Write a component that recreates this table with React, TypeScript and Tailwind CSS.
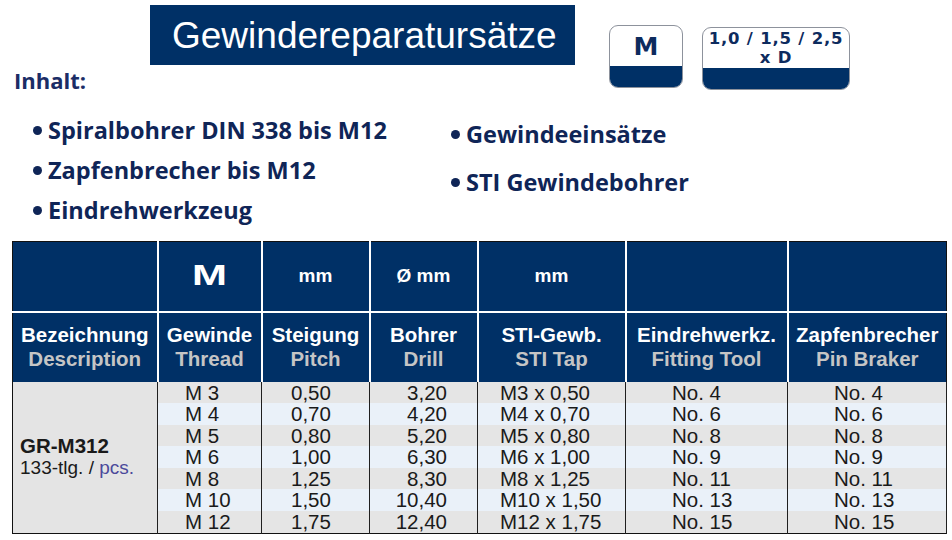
import React from "react";

const navy = "bg-[#003066]";

const rows = [
  ["M 3", "0,50", "3,20", "M3 x 0,50", "No. 4", "No. 4"],
  ["M 4", "0,70", "4,20", "M4 x 0,70", "No. 6", "No. 6"],
  ["M 5", "0,80", "5,20", "M5 x 0,80", "No. 8", "No. 8"],
  ["M 6", "1,00", "6,30", "M6 x 1,00", "No. 9", "No. 9"],
  ["M 8", "1,25", "8,30", "M8 x 1,25", "No. 11", "No. 11"],
  ["M 10", "1,50", "10,40", "M10 x 1,50", "No. 13", "No. 13"],
  ["M 12", "1,75", "12,40", "M12 x 1,75", "No. 15", "No. 15"],
];

const headers = [
  ["Bezeichnung", "Description"],
  ["Gewinde", "Thread"],
  ["Steigung", "Pitch"],
  ["Bohrer", "Drill"],
  ["STI-Gewb.", "STI Tap"],
  ["Eindrehwerkz.", "Fitting Tool"],
  ["Zapfenbrecher", "Pin Braker"],
];

function Badge({ w, children }: { w: string; children: React.ReactNode }) {
  return (
    <div className={`${w} flex h-[63px] flex-col overflow-hidden rounded-[9px] border border-[#8d929c] bg-white`}>
      <div className="flex flex-1 flex-col items-center justify-center text-[#0d2b5e]">{children}</div>
      <div className={`h-[21px] ${navy}`} />
    </div>
  );
}

function Bullet({ children }: { children: React.ReactNode }) {
  return (
    <div className="flex items-center">
      <span className="mr-[6px] inline-block h-[9px] w-[9px] rounded-full bg-[#0f2557]" />
      <span>{children}</span>
    </div>
  );
}

export default function App() {
  const cellPads = ["pl-[27px] text-left", "pl-[29px] text-left", "pr-[30px] text-right", "pl-[22px] text-left", "pl-[46px] text-left", "pl-[46px] text-left"];
  return (
    <div className="h-[540px] w-[952px] overflow-hidden bg-white font-['Liberation_Sans',Arial,sans-serif]">
      {/* top: title, badges, contents */}
      <div className="flex items-start">
        <div className="w-[609px]">
          <div className={`ml-[150px] mt-[5px] flex h-[60px] w-[425px] items-center pl-[22px] ${navy}`}>
            <span className="text-[37px] leading-none text-white">Gewindereparatursätze</span>
          </div>
          <div className="pl-[14px] font-['Open_Sans',sans-serif] text-[22px] font-bold leading-[30px] text-[#1b2d66]">Inhalt:</div>
        </div>
        <div className="mt-[25px]">
          <Badge w="w-[74px]">
            <span className="font-['DejaVu_Sans',sans-serif] text-[25px] font-bold leading-none">M</span>
          </Badge>
        </div>
        <div className="ml-[19px] mt-[27px]">
          <Badge w="w-[148px]">
            <div className="flex flex-col items-center font-['DejaVu_Sans',sans-serif] text-[16.5px] font-bold leading-[19px] tracking-[0.8px]">
              <span className="whitespace-nowrap">1,0 / 1,5 / 2,5</span>
              <span>x D</span>
            </div>
          </Badge>
        </div>
      </div>

      <div className="mt-[15px] flex font-['Open_Sans',sans-serif] text-[23.5px] font-bold text-[#0f2557]">
        <div className="w-[451px] pl-[33px] leading-[40px]">
          <Bullet>Spiralbohrer DIN 338 bis M12</Bullet>
          <Bullet>Zapfenbrecher bis M12</Bullet>
          <Bullet>Eindrehwerkzeug</Bullet>
        </div>
        <div className="leading-[48px]">
          <Bullet>Gewindeeinsätze</Bullet>
          <Bullet>STI Gewindebohrer</Bullet>
        </div>
      </div>

      {/* table */}
      <table className="ml-[12px] mt-[11px] w-[934px] table-fixed border-collapse border border-[#111]">
        <colgroup>
          <col className="w-[145px]" />
          <col className="w-[104px]" />
          <col className="w-[108px]" />
          <col className="w-[108px]" />
          <col className="w-[148px]" />
          <col className="w-[162px]" />
          <col className="w-[159px]" />
        </colgroup>
        <thead>
          <tr className={`h-[70px] ${navy} text-white`}>
            <th className="border-b-2 border-r-2 border-white" />
            <th className="border-2 border-t-0 border-white">
              <span className="inline-block scale-x-[1.4] text-[30px] font-bold leading-none">M</span>
            </th>
            <th className="border-2 border-t-0 border-white text-[19px] font-bold">mm</th>
            <th className="border-2 border-t-0 border-white text-[19px] font-bold">Ø mm</th>
            <th className="border-2 border-t-0 border-white text-[19px] font-bold">mm</th>
            <th className="border-2 border-t-0 border-white" />
            <th className="border-b-2 border-l-2 border-white" />
          </tr>
          <tr className={`h-[70px] ${navy}`}>
            {headers.map(([de, en], i) => (
              <th
                key={de}
                className={`border-white text-[20.5px] font-bold leading-[24px] ${i > 0 ? "border-l-2" : ""} ${i < 6 ? "border-r-2" : ""}`}
              >
                <div className="text-white">{de}</div>
                <div className="text-[#c5c5c5]">{en}</div>
              </th>
            ))}
          </tr>
        </thead>
        <tbody className="text-[20.5px] leading-[21.6px] text-[#1a1a1a]">
          {rows.map((r, ri) => (
            <tr key={r[0]} className={`h-[21.6px] ${ri % 2 === 0 ? "bg-[#e5e5e5]" : "bg-[#eaf1f9]"}`}>
              {ri === 0 && (
                <td rowSpan={7} className="border-r border-[#1f1f1f] bg-[#e4e4e4] pl-[7px] align-middle">
                  <div className="font-bold">GR-M312</div>
                  <div className="text-[19px]">
                    133-tlg. / <span className="text-[#4b4a9b]">pcs.</span>
                  </div>
                </td>
              )}
              {r.map((v, ci) => (
                <td key={ci} className={`border-x border-[#1f1f1f] p-0 ${cellPads[ci]}`}>
                  {v}
                </td>
              ))}
            </tr>
          ))}
        </tbody>
      </table>
    </div>
  );
}
